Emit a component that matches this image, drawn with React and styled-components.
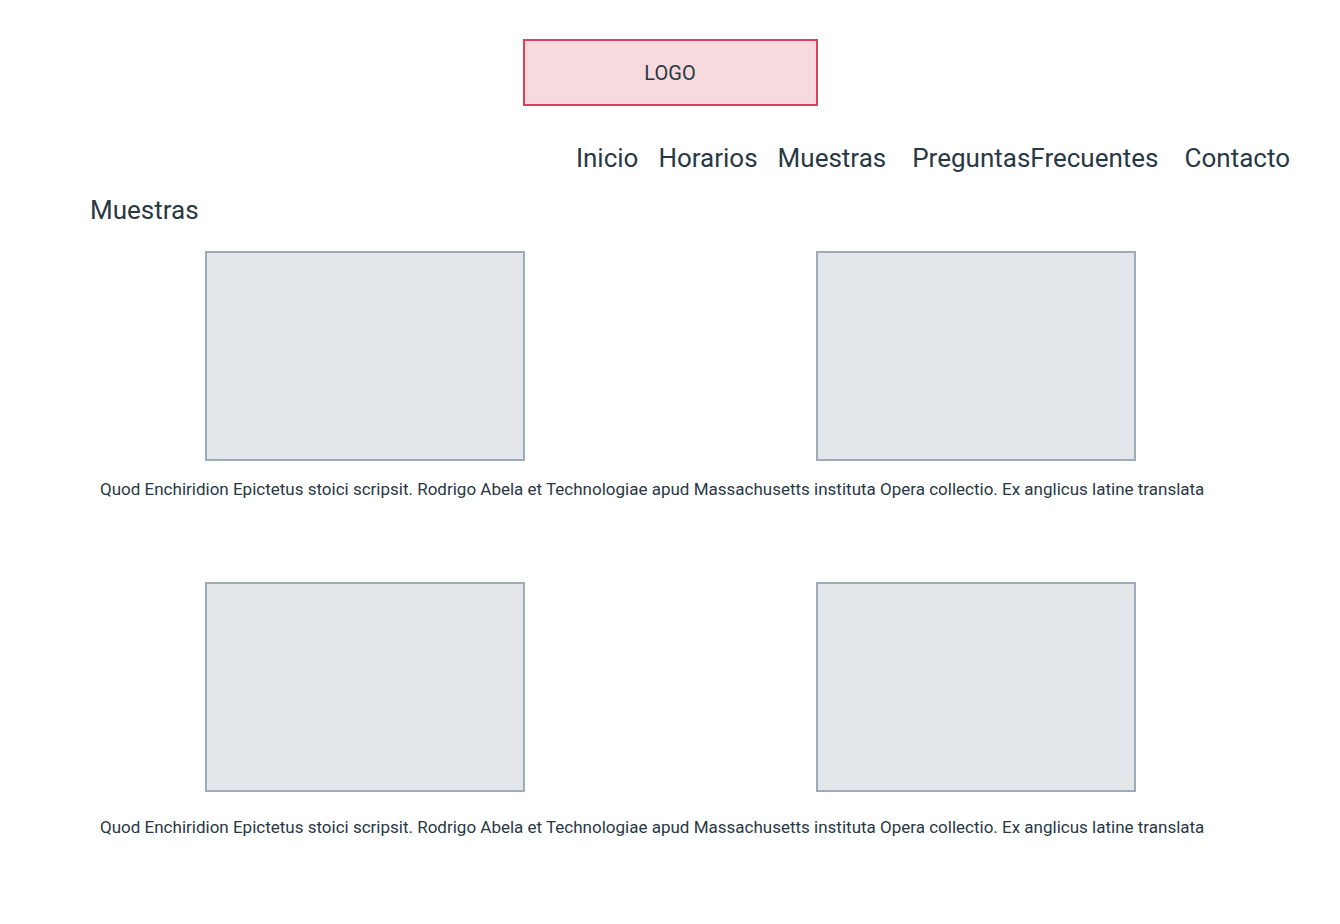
import React from "react";
import styled, { createGlobalStyle } from "styled-components";

const GlobalStyle = createGlobalStyle`
  *, *::before, *::after { box-sizing: border-box; }
  body {
    margin: 0;
    background: #ffffff;
    color: #293845;
    font-family: Roboto, "Liberation Sans", sans-serif;
  }
`;

const Page = styled.div`
  padding: 39px 0 80px;
`;

const Header = styled.header`
  display: flex;
  flex-direction: column;
`;

const Logo = styled.div`
  align-self: center;
  display: flex;
  align-items: center;
  justify-content: center;
  width: 295px;
  max-width: 100%;
  height: 67px;
  border: 2px solid #d9415d;
  background: #f6dadd;
  font-size: 20px;
  line-height: 24px;
`;

const Nav = styled.nav`
  display: flex;
  justify-content: flex-end;
  gap: 20px;
  margin-top: 36px;
  padding-right: 50px;
`;

const NavLink = styled.a`
  color: inherit;
  font-size: 26px;
  line-height: 32px;
  text-decoration: none;
  white-space: nowrap;
  margin-left: ${({ $spaced }) => ($spaced ? "6px" : "0")};
`;

const Title = styled.h1`
  margin: 20px 0 0 90px;
  font-size: 26px;
  font-weight: 400;
  line-height: 32px;
`;

const Gallery = styled.section`
  margin-top: ${({ $first }) => ($first ? "25px" : "81px")};
`;

const Frames = styled.div`
  display: flex;
  justify-content: space-between;
  padding: 0 204px 0 205px;
`;

const Frame = styled.div`
  width: 320px;
  height: 210px;
  border: 2px solid #9cacb9;
  background: #e2e6e9;
`;

const Caption = styled.p`
  margin: ${({ $gap }) => $gap}px 0 0 100px;
  font-size: 17px;
  line-height: 24px;
`;

const links = [
  { label: "Inicio", href: "#inicio" },
  { label: "Horarios", href: "#horarios" },
  { label: "Muestras", href: "#muestras" },
  { label: "PreguntasFrecuentes", href: "#preguntas", spaced: true },
  { label: "Contacto", href: "#contacto", spaced: true },
];

const text =
  "Quod Enchiridion Epictetus stoici scripsit. Rodrigo Abela et Technologiae apud Massachusetts instituta Opera collectio. Ex anglicus latine translata";

export default function App() {
  return (
    <Page>
      <GlobalStyle />
      <Header>
        <Logo>LOGO</Logo>
        <Nav aria-label="Principal">
          {links.map(({ label, href, spaced }) => (
            <NavLink key={href} href={href} $spaced={spaced}>{label}</NavLink>
          ))}
        </Nav>
      </Header>
      <main>
        <Title>Muestras</Title>
        <Gallery $first>
          <Frames><Frame /><Frame /></Frames>
          <Caption $gap={16}>{text}</Caption>
        </Gallery>
        <Gallery>
          <Frames><Frame /><Frame /></Frames>
          <Caption $gap={23}>{text}</Caption>
        </Gallery>
      </main>
    </Page>
  );
}
